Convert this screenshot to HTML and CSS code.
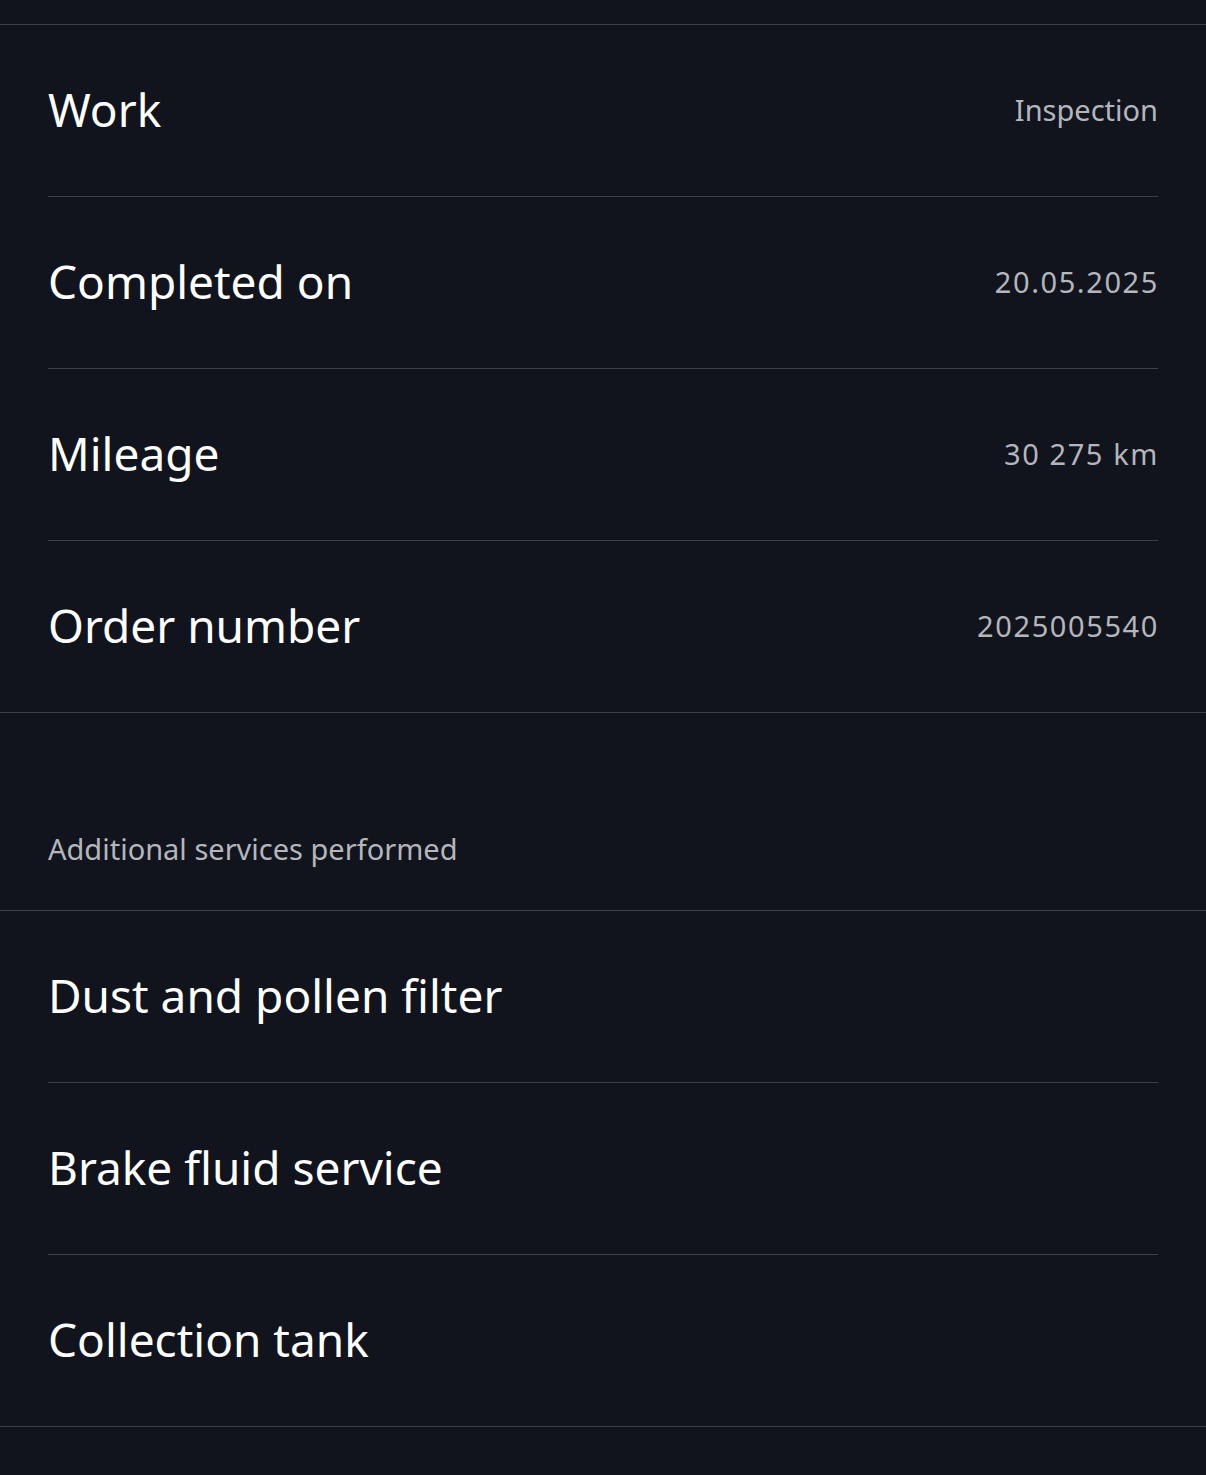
FILE: index.html
```html
<!DOCTYPE html>
<html lang="en">
<head>
	<meta charset="UTF-8">
	<title>Service details</title>
	<link rel="stylesheet" href="styles.css">
</head>
<body>
	<div class="app">
		<div class="list">
			<div class="row"><span class="label">Work</span><span class="value">Inspection</span></div>
			<div class="row"><span class="label">Completed on</span><span class="value num">20.05.2025</span></div>
			<div class="row"><span class="label">Mileage</span><span class="value num">30 275 km</span></div>
			<div class="row"><span class="label">Order number</span><span class="value num">2025005540</span></div>
		</div>

		<div class="section">Additional services performed</div>

		<div class="list">
			<div class="row"><span class="label">Dust and pollen filter</span></div>
			<div class="row"><span class="label">Brake fluid service</span></div>
			<div class="row"><span class="label">Collection tank</span></div>
		</div>
	</div>
</body>
</html>
```

FILE: styles.css
```css
body {
	margin: 0px;
	color: #ffffff;
	background-color: #11141c;
	font-family: "Noto Sans", "Open Sans", sans-serif;
}
.app {
	padding-top: 24px;
	min-height: 1451px;
}
.list {
	border-top: 1px solid #3d4048;
	border-bottom: 1px solid #3d4048;
	padding: 0px 48px;
}
.row {
	display: flex;
	justify-content: space-between;
	align-items: center;
	height: 171px;
	border-bottom: 1px solid #3d4048;
}
.row:last-child {
	border-bottom: none;
}
.label {
	font-size: 46px;
	color: #ffffff;
	margin-top: -3px;
}
.value {
	font-size: 29px;
	color: #b4b6bc;
	margin-top: -2px;
}
.num {
	letter-spacing: 1.6px;
	margin-right: -1px;
}
.section {
	height: 197px;
	display: flex;
	align-items: flex-end;
	padding: 0px 48px 42px 48px;
	box-sizing: border-box;
	font-size: 29px;
	color: #b4b6bc;
}
```
